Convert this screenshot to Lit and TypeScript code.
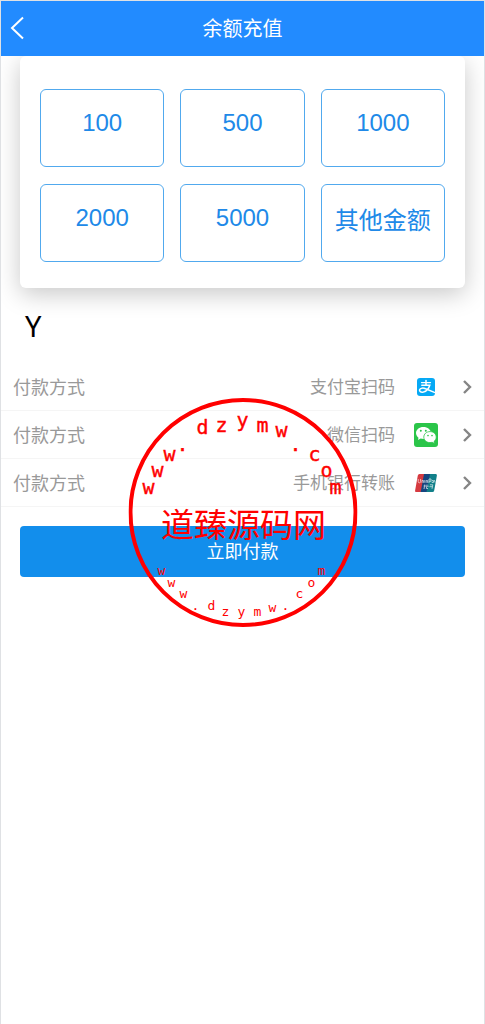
import { LitElement, html, css, svg } from "lit";
import { customElement } from "lit/decorators.js";

type Mark = [string, number, number];

const upperMarks: Mark[] = [
  ["w", 20, 96], ["w", 29, 79], ["w", 41, 63], [".", 54, 53], ["d", 74, 36],
  ["z", 93, 34], ["y", 114, 29], ["m", 134, 34], ["w", 153, 39], [".", 167, 53],
  ["c", 186, 63], ["o", 198, 79], ["m", 207, 96],
];

const lowerMarks: Mark[] = [
  ["w", 33, 177], ["w", 43, 189], ["w", 55, 200], [".", 67, 212], ["d", 83, 212],
  ["z", 97, 218], ["y", 113, 218], ["m", 129, 218], ["w", 144, 214], [".", 157, 212],
  ["c", 171, 200], ["o", 183, 189], ["m", 193, 177],
];

const alipayIcon = svg`
  <rect x="3" y="3" width="18" height="18" rx="3" fill="#06a9f5"/>
  <g fill="none" stroke="#fff" stroke-linecap="round">
    <path d="M7.500 7.600H16.500" stroke-width="1.300"/>
    <path d="M12 5.400V10" stroke-width="1.500"/>
    <path d="M7.800 10.200H15.800C15 12.800 12.600 16.200 9.400 17C6.600 17.600 5.200 16.200 5.600 14.800C6.200 12.900 9.200 12.700 11.600 13.800L20.400 17.400" stroke-width="1.500"/>
  </g>`;

const wechatIcon = svg`
  <rect width="24" height="24" rx="3" fill="#2bc549"/>
  <path d="M9.400 4C5.200 4 2 6.700 2 10.100C2 12 3 13.600 4.500 14.700L4 17L6.700 15.600C7.600 15.800 8.500 16 9.400 16C13.600 16 17 13.400 17 10.100C17 6.700 13.600 4 9.400 4Z" fill="#fff"/>
  <path d="M16 8.600C12.500 8.600 9.800 11 9.800 14.100C9.800 17.200 12.500 19.600 16 19.600C16.800 19.600 17.500 19.500 18.200 19.300L20.500 20.500L20 18.500C21.400 17.500 22.200 15.900 22.200 14.100C22.200 11 19.500 8.600 16 8.600Z" fill="#fff" stroke="#2bc549" stroke-width=".8"/>
  <g fill="#2bc549"><circle cx="6.800" cy="7.800" r="1"/><circle cx="11.800" cy="7.800" r="1"/><circle cx="14" cy="12.600" r=".8"/><circle cx="18" cy="12.600" r=".8"/></g>`;

const unionPayIcon = svg`
  <path d="M5.500 3H12L8.500 21H2Q.8 21 1.100 19.500L3.800 4.500Q4.100 3 5.500 3Z" fill="#d63a40"/>
  <path d="M10 3H17L13.500 21H6.700Z" fill="#16457f"/>
  <path d="M16 3H21.800Q23.200 3 22.900 4.500L20.200 19.500Q19.900 21 18.500 21H12.500Z" fill="#12808a"/>
  <g fill="none" stroke="#fff" stroke-width=".9" opacity=".7">
    <path d="M4.200 8V10.500Q4.200 11.800 5.400 11.800T6.600 10.500V8M8 11.800V9.500H9.400V11.800M10.800 9V11.800M12.200 11.800V9.500H13.600V11.800M15 12V8H17V10.300H15M18 9.500H19.500V11.500H18V10.500M20.500 9L21 11.500"/>
    <path d="M10.800 13.500L10 18M9.600 15H12M13 13.500L12.300 17.500H14M13 15.200H14.600M16 13.800H18.800L18 17.800M15.500 15.700H18.500"/>
  </g>`;

@customElement("app-root")
export class AppRoot extends LitElement {
  static styles = css`
    :host {
      display: block;
      font-family: "Liberation Sans", "Noto Sans CJK SC", sans-serif;
      color: #000;
      background: #fff;
    }
    * { box-sizing: border-box; }
    button { font: inherit; cursor: pointer; }
    .page {
      position: relative;
      min-height: 100vh;
      border: 1px solid #dfe1e4;
      border-bottom: 0;
      overflow-x: clip;
    }
    .header {
      position: relative;
      z-index: 1;
      display: grid;
      grid-template-columns: 48px 1fr 48px;
      align-items: center;
      height: 55px;
      background: #228bff;
      color: #fff;
    }
    .back {
      display: flex;
      padding: 0 0 2px 8px;
      border: 0;
      background: none;
      color: inherit;
    }
    .title {
      margin: 0;
      font-size: 20px;
      line-height: 28px;
      font-weight: 400;
      text-align: center;
    }
    .card {
      display: grid;
      grid-template-columns: repeat(3, 1fr);
      gap: 17px 16px;
      margin: 0 19px;
      padding: 33px 20px 26px;
      border-radius: 6px;
      background: #fff;
      box-shadow: 0 6px 24px rgba(0, 0, 0, 0.22);
    }
    .amount {
      display: flex;
      justify-content: center;
      align-items: flex-start;
      height: 78px;
      padding: 17px 0 0;
      border: 1px solid #51a9ee;
      border-radius: 6px;
      background: #fff;
      color: #2089e8;
      font-size: 24px;
      line-height: 32px;
      white-space: nowrap;
    }
    .other { padding-top: 20px; }
    .currency {
      margin: 0;
      padding: 20px 24px;
      font-family: "Noto Sans", sans-serif;
      font-size: 29px;
      line-height: 35px;
    }
    .method {
      display: flex;
      align-items: center;
      width: 100%;
      height: 48px;
      padding: 0 10px 0 12px;
      border: 0;
      border-bottom: 1px solid #f5f5f5;
      background: none;
      color: #999;
      font-size: 18px;
      line-height: 24px;
    }
    .label, .value { padding-top: 2px; }
    .value {
      flex: 1;
      padding-right: 19px;
      font-size: 17px;
      text-align: right;
    }
    .chevron { margin-left: 22px; }
    .pay {
      display: block;
      width: calc(100% - 38px);
      height: 51px;
      margin: 19px 19px 0;
      padding: 0 0 3px;
      border: 0;
      border-radius: 4px;
      background: #128eec;
      color: #fff;
      font-size: 18px;
    }
    .stamp {
      position: absolute;
      top: 397px;
      left: 50%;
      width: 229px;
      height: 229px;
      transform: translateX(-50%);
      pointer-events: none;
      fill: #f00;
      text-anchor: middle;
    }
    .ring { fill: none; stroke: #f00; stroke-width: 4px; }
    .name { font: 33px "Noto Sans CJK SC", sans-serif; }
    .upper { font: 20px "DejaVu Sans Mono", monospace; stroke: #f00; stroke-width: 0.4px; }
    .lower { font: 13px "DejaVu Sans Mono", monospace; }
  `;

  private amounts = ["100", "500", "1000", "2000", "5000"];

  private methods = [
    { name: "支付宝扫码", icon: alipayIcon },
    { name: "微信扫码", icon: wechatIcon },
    { name: "手机银行转账", icon: unionPayIcon },
  ];

  render() {
    return html`
      <main class="page">
        <header class="header">
          <button class="back" aria-label="返回">
            <svg width="18" height="24" viewBox="0 0 18 24" fill="none" stroke="currentColor" stroke-width="2">
              <path d="M14 1.500L3 12L14 22.500"/>
            </svg>
          </button>
          <h1 class="title">余额充值</h1>
        </header>
        <section class="card">
          ${this.amounts.map((a) => html`<button class="amount">${a}</button>`)}
          <button class="amount other">其他金额</button>
        </section>
        <p class="currency">Y</p>
        ${this.methods.map(
          (m) => html`
            <button class="method">
              <span class="label">付款方式</span>
              <span class="value">${m.name}</span>
              <svg width="24" height="24" viewBox="0 0 24 24">${m.icon}</svg>
              <svg class="chevron" width="14" height="14" viewBox="0 0 14 14" fill="none" stroke="#858585" stroke-width="2.400">
                <path d="M4 1L10 7L4 13"/>
              </svg>
            </button>
          `
        )}
        <button class="pay">立即付款</button>
        <svg class="stamp" viewBox="0 0 229 229">
          <circle class="ring" cx="114.500" cy="114.500" r="112.500"/>
          <text class="name" x="115" y="139">道臻源码网</text>
          ${upperMarks.map(([c, x, y]) => svg`<text class="upper" x=${x} y=${y}>${c}</text>`)}
          ${lowerMarks.map(([c, x, y]) => svg`<text class="lower" x=${x} y=${y}>${c}</text>`)}
        </svg>
      </main>
    `;
  }
}
